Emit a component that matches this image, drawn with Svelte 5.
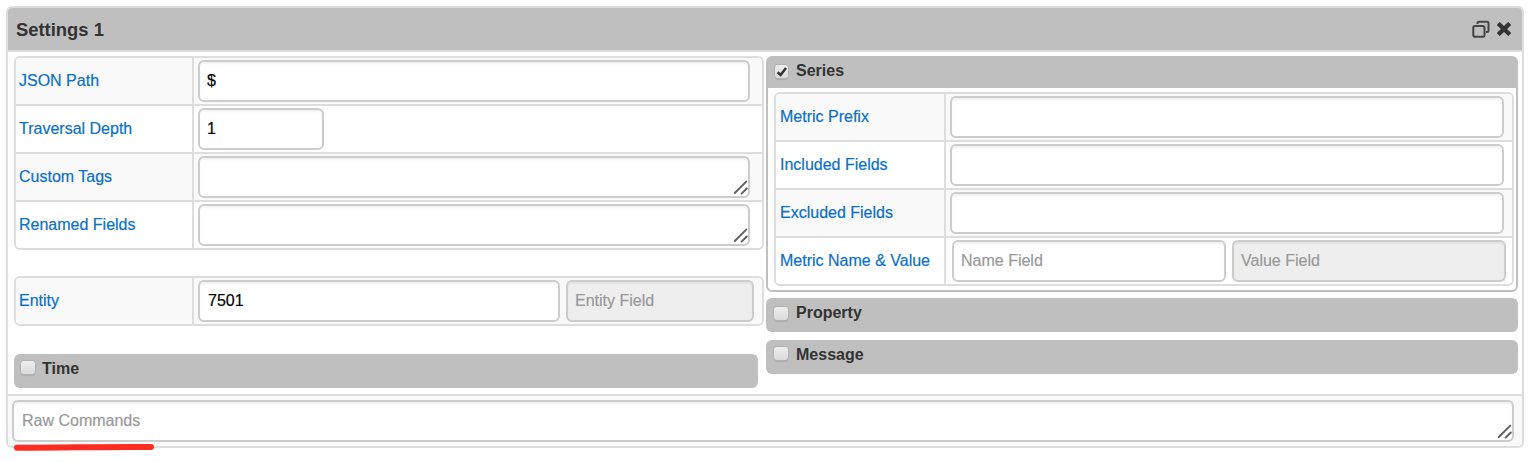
<script>
  const general = [
    { label: 'JSON Path', value: '$', kind: 'input' },
    { label: 'Traversal Depth', value: '1', kind: 'short' },
    { label: 'Custom Tags', value: '', kind: 'area' },
    { label: 'Renamed Fields', value: '', kind: 'area' }
  ];
  const series = ['Metric Prefix', 'Included Fields', 'Excluded Fields'];
</script>

{#snippet grip()}
  <svg class="grip" width="16" height="16" viewBox="0 0 16 16" aria-hidden="true">
    <path d="M2.8 13 14.2 1.6M9.6 13.7 14.8 8.5" fill="none" stroke="#5f5f5f" stroke-width="1.9" stroke-linecap="round" />
  </svg>
{/snippet}

{#snippet check(on)}
  <span class="check" role="checkbox" aria-checked={on} tabindex="0" aria-label="toggle">
    {#if on}
      <svg width="14" height="14" viewBox="0 0 14 14"><path d="M2.6 7.3 5.6 9.9 11 3" fill="none" stroke="#333" stroke-width="2.5" /></svg>
    {/if}
  </span>
{/snippet}

<section class="panel">
  <header>
    <h1>Settings 1</h1>
    <svg class="copy" width="18" height="18" viewBox="0 0 18 18">
      <g fill="none" stroke="#444" stroke-width="2">
        <rect x="1.3" y="6" width="11.2" height="10.7" rx="1.8" />
        <path d="M5.5 4V3.2Q5.5 1.7 7 1.7H15Q16.5 1.7 16.5 3.2V10.4Q16.5 11.9 15 11.9H14" />
      </g>
    </svg>
    <svg class="close" width="14" height="14" viewBox="0 0 14 14">
      <path d="M2.8 3 11.2 11M11.2 3 2.8 11" stroke="#333" stroke-width="4.4" stroke-linecap="square" stroke-linejoin="round" />
    </svg>
  </header>

  <div class="body">
    <div class="left">
      <div class="table">
        {#each general as row}
          <div class="row">
            <div class="label">{row.label}</div>
            <div class="cell">
              <div class="field {row.kind}">{row.value}{#if row.kind === 'area'}{@render grip()}{/if}</div>
            </div>
          </div>
        {/each}
      </div>
      <div class="table entity">
        <div class="row">
          <div class="label">Entity</div>
          <div class="cell">
            <div class="field name">7501</div>
            <div class="field off alt">Entity Field</div>
          </div>
        </div>
      </div>
      <div class="bar time">{@render check(false)}<b>Time</b></div>
    </div>

    <div class="right">
      <div class="series">
        <div class="bar top">{@render check(true)}<b>Series</b></div>
        <div class="table">
          {#each series as label}
            <div class="row">
              <div class="label">{label}</div>
              <div class="cell"><div class="field wide"></div></div>
            </div>
          {/each}
          <div class="row">
            <div class="label">Metric Name &amp; Value</div>
            <div class="cell pair">
              <div class="field hint">Name Field</div>
              <div class="field off">Value Field</div>
            </div>
          </div>
        </div>
      </div>
      <div class="bar">{@render check(false)}<b>Property</b></div>
      <div class="bar message">{@render check(false)}<b>Message</b></div>
    </div>
  </div>

  <footer>
    <div class="field raw">Raw Commands{@render grip()}</div>
    <svg class="marker" width="144" height="10" viewBox="0 0 144 10">
      <path d="M4 5.7C45 5.9 95 4.5 138 5" fill="none" stroke="#fd2b20" stroke-width="6" stroke-linecap="round" />
    </svg>
  </footer>
</section>

<style>
  :global(body) { display: flow-root; min-height: 462px; background: #fff; }
  .panel, .panel :global(*) { box-sizing: border-box; }
  .panel {
    width: 1518px;
    height: 442px;
    margin: 6px 0 0 6px;
    border: 2px solid #ddd;
    border-radius: 6px;
    font: 16px/20px "Liberation Sans", Arial, sans-serif;
    color: #333;
  }
  header {
    display: flex;
    align-items: center;
    height: 44px;
    padding: 0 10px 0 8px;
    background: #bfbfbf;
    border-bottom: 2px solid #ddd;
    border-radius: 4px 4px 0 0;
  }
  h1 { margin: 1px 0 0; flex: 1; font-size: 18.4px; line-height: 24px; }
  .copy { margin-right: 7px; }
  .close { margin-right: 1px; }
  .body { display: flex; gap: 2px; height: 342px; padding: 4px 4px 0 6px; }
  .left { width: 750px; }
  .right { width: 752px; }
  .table { border: 2px solid #ddd; border-radius: 6px; overflow: hidden; }
  .row { display: flex; height: 48px; border-bottom: 2px solid #ddd; }
  .row:last-child { height: 46px; border-bottom: 0; }
  .row:nth-child(odd) { background: #f9f9f9; }
  .label { width: 178px; padding: 13px 0 0 3px; border-right: 2px solid #ddd; color: #0a70c4; white-space: nowrap; }
  .label, .field { -webkit-text-stroke: 0.2px currentColor; }
  .cell { display: flex; flex: 1; gap: 6px; padding: 2px 0 0 4px; }
  .field {
    position: relative;
    height: 42px;
    padding: 9px 7px;
    border: 2px solid #ccc;
    border-radius: 6px;
    background: #fff;
    box-shadow: inset 0 2px 2px rgba(0, 0, 0, 0.05);
    color: #000;
  }
  .input, .area { width: 552px; }
  .short { width: 126px; }
  .name { width: 362px; padding-left: 8px; }
  .alt { width: 188px; }
  .wide { width: 554px; }
  .off { background: #eee; }
  .off, .hint, .raw { color: #999; }
  .grip { position: absolute; right: 0; bottom: 0; }
  .entity { margin-top: 26px; }
  .bar {
    display: flex;
    height: 34px;
    padding: 5px 0 0 7px;
    gap: 8px;
    border-radius: 6px;
    background: #bfbfbf;
  }
  .time { width: 744px; margin-top: 28px; gap: 7px; }
  .check {
    width: 13px;
    height: 13px;
    margin-top: 2px;
    border-radius: 3px;
    background: linear-gradient(#eee, #dadada);
    box-shadow: 0 0 0 1px #b2b2b2, 0 2px 1px #aaa;
  }
  .time .check { width: 14px; }
  .check svg { display: block; }
  .series { height: 236px; margin-bottom: 6px; border: 2px solid #bfbfbf; border-radius: 6px; padding: 0 2px 0 6px; }
  .top { height: 30px; margin: 0 -2px 4px -6px; padding: 3px 0 0 7px; border-radius: 0; }
  .top .check { margin-top: 4px; }
  .series .label { width: 170px; padding-left: 4px; }
  .pair { padding-left: 6px; }
  .pair .field { width: 274px; }
  .message { margin-top: 8px; }
  .right > .bar { padding-left: 8px; }
  .right > .bar .check { width: 14px; margin-top: 4px; }
  .right > .message .check { margin-top: 2px; }
  footer { position: relative; height: 52px; padding: 4px 0 0 4px; border-top: 2px solid #ddd; border-radius: 0 0 4px 4px; background: #f9f9f9; }
  .raw { width: 1502px; padding-left: 8px; }
  .marker { position: absolute; left: 5px; top: 46px; }
</style>
